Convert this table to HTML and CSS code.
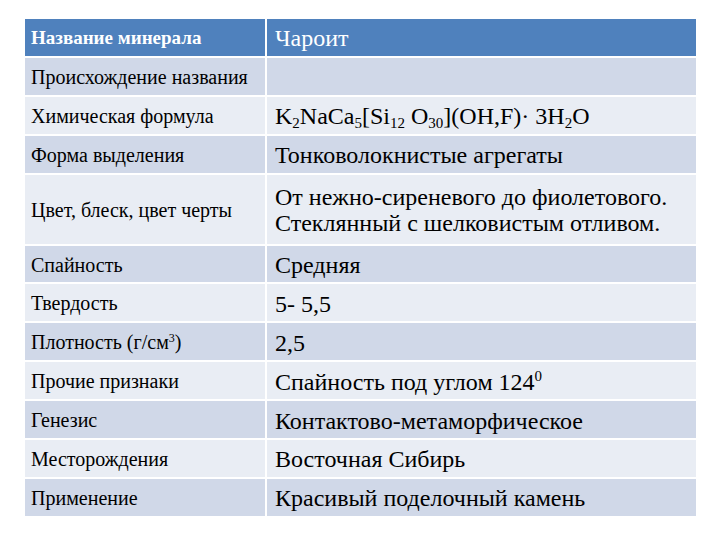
FILE: index.html
```html
<!DOCTYPE html>
<html lang="ru">
<head>
<meta charset="utf-8">
<title>Mineral</title>
<link rel="stylesheet" href="styles.css">
</head>
<body>
<div class="table">
  <div class="cell head key">Название минерала</div>
  <div class="cell head val">Чароит</div>

  <div class="cell dark key">Происхождение названия</div>
  <div class="cell dark val"></div>

  <div class="cell light key">Химическая формула</div>
  <div class="cell light val"><span>K<sub>2</sub>NaCa<sub>5</sub>[Si<sub>12</sub> O<sub>30</sub>](OH,F)· 3H<sub>2</sub>O</span></div>

  <div class="cell dark key">Форма выделения</div>
  <div class="cell dark val">Тонковолокнистые агрегаты</div>

  <div class="cell light key">Цвет, блеск, цвет черты</div>
  <div class="cell light val"><span>От нежно-сиреневого до фиолетового.<br>Стеклянный с шелковистым отливом.</span></div>

  <div class="cell dark key">Спайность</div>
  <div class="cell dark val">Средняя</div>

  <div class="cell light key">Твердость</div>
  <div class="cell light val">5- 5,5</div>

  <div class="cell dark key"><span>Плотность (г/см<sup>3</sup>)</span></div>
  <div class="cell dark val">2,5</div>

  <div class="cell light key">Прочие признаки</div>
  <div class="cell light val"><span>Спайность под углом 124<sup class="deg">0</sup></span></div>

  <div class="cell dark key">Генезис</div>
  <div class="cell dark val">Контактово-метаморфическое</div>

  <div class="cell light key">Месторождения</div>
  <div class="cell light val">Восточная Сибирь</div>

  <div class="cell dark key">Применение</div>
  <div class="cell dark val">Красивый поделочный камень</div>
</div>
</body>
</html>
```

FILE: styles.css
```css
html, body {
  margin: 0;
  padding: 0;
  background: #ffffff;
}
body {
  padding: 19px 0 0 25px;
  font-family: "Liberation Serif", serif;
  color: #000000;
}
.table {
  width: 671px;
  display: grid;
  grid-template-columns: 240px 1fr;
  grid-template-rows: repeat(4, 36.9px) 69px repeat(7, 36.9px);
  column-gap: 2px;
  row-gap: 2px;
}
.cell {
  display: flex;
  align-items: center;
  white-space: nowrap;
  padding-top: 2px;
}
.key {
  padding-left: 6px;
  font-size: 20px;
}
.val {
  padding-left: 8px;
  font-size: 24px;
  line-height: 26px;
}
.head {
  background: #4f81bd;
  color: #ffffff;
}
.head.key {
  font-weight: bold;
  font-size: 19px;
}
.dark {
  background: #d0d8e8;
}
.light {
  background: #e9edf4;
}
sub {
  font-size: 15px;
  position: relative;
  top: 4px;
  vertical-align: baseline;
  line-height: 0;
}
sup {
  font-size: 12px;
  position: relative;
  top: -7px;
  vertical-align: baseline;
  line-height: 0;
}
sup.deg {
  font-size: 15px;
  top: -9px;
}
```
